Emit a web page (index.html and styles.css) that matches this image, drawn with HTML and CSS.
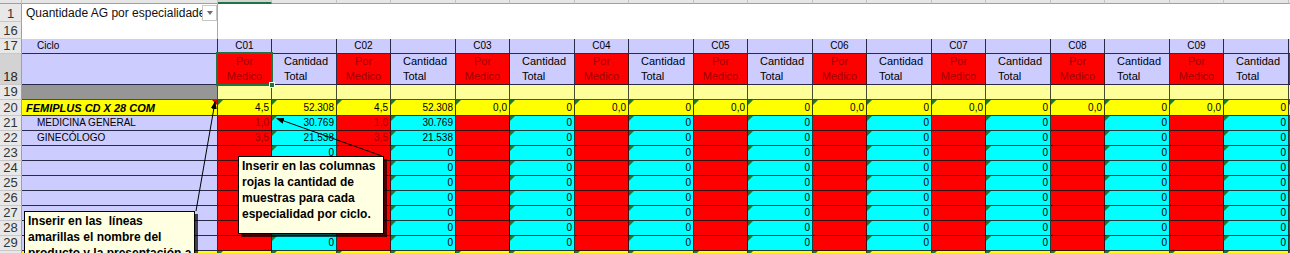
FILE: index.html
```html
<!DOCTYPE html>
<html lang="es">
<head>
<meta charset="utf-8">
<title>Quantidade AG por especialidade</title>
<link rel="stylesheet" href="styles.css">
</head>
<body>
<div class="sheet">
  <!-- column header strip -->
  <div class="row">
    <div class="ch corner"></div><div class="ch"></div>
    <div class="ch chsel"></div><div class="ch"></div>
    <div class="ch"></div><div class="ch"></div>
    <div class="ch"></div><div class="ch"></div>
    <div class="ch"></div><div class="ch"></div>
    <div class="ch"></div><div class="ch"></div>
    <div class="ch"></div><div class="ch"></div>
    <div class="ch"></div><div class="ch"></div>
    <div class="ch"></div><div class="ch"></div>
    <div class="ch"></div><div class="ch"></div>
    <div class="ch"></div>
  </div>

  <!-- row 1 -->
  <div class="row">
    <div class="rh">1</div>
    <div class="title"><span class="title-text">Quantidade AG por especialidade</span><span class="dd"><span class="dd-arrow"></span></span></div>
    <div class="blank"></div>
  </div>

  <!-- row 16 -->
  <div class="row">
    <div class="rh">16</div>
    <div class="frozen"></div>
    <div class="blank"></div>
  </div>

  <!-- row 17 -->
  <div class="row">
    <div class="rh">17</div>
    <div class="c lav label">Ciclo</div>
    <div class="c lav ctr">C01</div><div class="c lav"></div>
    <div class="c lav ctr">C02</div><div class="c lav"></div>
    <div class="c lav ctr">C03</div><div class="c lav"></div>
    <div class="c lav ctr">C04</div><div class="c lav"></div>
    <div class="c lav ctr">C05</div><div class="c lav"></div>
    <div class="c lav ctr">C06</div><div class="c lav"></div>
    <div class="c lav ctr">C07</div><div class="c lav"></div>
    <div class="c lav ctr">C08</div><div class="c lav"></div>
    <div class="c lav ctr">C09</div><div class="c lav"></div>
    <div class="c lav"></div>
  </div>

  <!-- row 18 -->
  <div class="row">
    <div class="rh rhsel">18</div>
    <div class="c lav"></div>
    <div class="c red pm">Por<br>Medico</div><div class="c lav ct">Cantidad<br>Total</div>
    <div class="c red pm">Por<br>Medico</div><div class="c lav ct">Cantidad<br>Total</div>
    <div class="c red pm">Por<br>Medico</div><div class="c lav ct">Cantidad<br>Total</div>
    <div class="c red pm">Por<br>Medico</div><div class="c lav ct">Cantidad<br>Total</div>
    <div class="c red pm">Por<br>Medico</div><div class="c lav ct">Cantidad<br>Total</div>
    <div class="c red pm">Por<br>Medico</div><div class="c lav ct">Cantidad<br>Total</div>
    <div class="c red pm">Por<br>Medico</div><div class="c lav ct">Cantidad<br>Total</div>
    <div class="c red pm">Por<br>Medico</div><div class="c lav ct">Cantidad<br>Total</div>
    <div class="c red pm">Por<br>Medico</div><div class="c lav ct">Cantidad<br>Total</div>
    <div class="c red pm"></div>
  </div>

  <!-- row 19 -->
  <div class="row">
    <div class="rh">19</div>
    <div class="c gray"></div>
    <div class="c pale"></div><div class="c pale"></div>
    <div class="c pale"></div><div class="c pale"></div>
    <div class="c pale"></div><div class="c pale"></div>
    <div class="c pale"></div><div class="c pale"></div>
    <div class="c pale"></div><div class="c pale"></div>
    <div class="c pale"></div><div class="c pale"></div>
    <div class="c pale"></div><div class="c pale"></div>
    <div class="c pale"></div><div class="c pale"></div>
    <div class="c pale"></div><div class="c pale"></div>
    <div class="c pale"></div>
  </div>

  <!-- row 20 -->
  <div class="row">
    <div class="rh">20</div>
    <div class="c yel product">FEMIPLUS CD X 28 COM<span class="note"></span></div>
    <div class="c yel num tri">4,5</div><div class="c yel num tri">52.308</div>
    <div class="c yel num tri">4,5</div><div class="c yel num tri">52.308</div>
    <div class="c yel num tri">0,0</div><div class="c yel num tri">0</div>
    <div class="c yel num tri">0,0</div><div class="c yel num tri">0</div>
    <div class="c yel num tri">0,0</div><div class="c yel num tri">0</div>
    <div class="c yel num tri">0,0</div><div class="c yel num tri">0</div>
    <div class="c yel num tri">0,0</div><div class="c yel num tri">0</div>
    <div class="c yel num tri">0,0</div><div class="c yel num tri">0</div>
    <div class="c yel num tri">0,0</div><div class="c yel num tri">0</div>
    <div class="c yel num tri"></div>
  </div>

  <!-- row 21 -->
  <div class="row">
    <div class="rh">21</div>
    <div class="c lav label">MEDICINA GENERAL</div>
    <div class="c red num">1,0</div><div class="c cy num tri">30.769</div>
    <div class="c red num">1,0</div><div class="c cy num tri">30.769</div>
    <div class="c red"></div><div class="c cy num tri">0</div>
    <div class="c red"></div><div class="c cy num tri">0</div>
    <div class="c red"></div><div class="c cy num tri">0</div>
    <div class="c red"></div><div class="c cy num tri">0</div>
    <div class="c red"></div><div class="c cy num tri">0</div>
    <div class="c red"></div><div class="c cy num tri">0</div>
    <div class="c red"></div><div class="c cy num tri">0</div>
    <div class="c red"></div>
  </div>

  <!-- row 22 -->
  <div class="row">
    <div class="rh">22</div>
    <div class="c lav label">GINECÓLOGO</div>
    <div class="c red num">3,5</div><div class="c cy num tri">21.538</div>
    <div class="c red num">3,5</div><div class="c cy num tri">21.538</div>
    <div class="c red"></div><div class="c cy num tri">0</div>
    <div class="c red"></div><div class="c cy num tri">0</div>
    <div class="c red"></div><div class="c cy num tri">0</div>
    <div class="c red"></div><div class="c cy num tri">0</div>
    <div class="c red"></div><div class="c cy num tri">0</div>
    <div class="c red"></div><div class="c cy num tri">0</div>
    <div class="c red"></div><div class="c cy num tri">0</div>
    <div class="c red"></div>
  </div>

  <!-- rows 23 - 29 -->
  <div class="row">
    <div class="rh">23</div>
    <div class="c lav"></div>
    <div class="c red"></div><div class="c cy num tri">0</div>
    <div class="c red"></div><div class="c cy num tri">0</div>
    <div class="c red"></div><div class="c cy num tri">0</div>
    <div class="c red"></div><div class="c cy num tri">0</div>
    <div class="c red"></div><div class="c cy num tri">0</div>
    <div class="c red"></div><div class="c cy num tri">0</div>
    <div class="c red"></div><div class="c cy num tri">0</div>
    <div class="c red"></div><div class="c cy num tri">0</div>
    <div class="c red"></div><div class="c cy num tri">0</div>
    <div class="c red"></div>
  </div>
  <div class="row">
    <div class="rh">24</div>
    <div class="c lav"></div>
    <div class="c red"></div><div class="c cy num tri">0</div>
    <div class="c red"></div><div class="c cy num tri">0</div>
    <div class="c red"></div><div class="c cy num tri">0</div>
    <div class="c red"></div><div class="c cy num tri">0</div>
    <div class="c red"></div><div class="c cy num tri">0</div>
    <div class="c red"></div><div class="c cy num tri">0</div>
    <div class="c red"></div><div class="c cy num tri">0</div>
    <div class="c red"></div><div class="c cy num tri">0</div>
    <div class="c red"></div><div class="c cy num tri">0</div>
    <div class="c red"></div>
  </div>
  <div class="row">
    <div class="rh">25</div>
    <div class="c lav"></div>
    <div class="c red"></div><div class="c cy num tri">0</div>
    <div class="c red"></div><div class="c cy num tri">0</div>
    <div class="c red"></div><div class="c cy num tri">0</div>
    <div class="c red"></div><div class="c cy num tri">0</div>
    <div class="c red"></div><div class="c cy num tri">0</div>
    <div class="c red"></div><div class="c cy num tri">0</div>
    <div class="c red"></div><div class="c cy num tri">0</div>
    <div class="c red"></div><div class="c cy num tri">0</div>
    <div class="c red"></div><div class="c cy num tri">0</div>
    <div class="c red"></div>
  </div>
  <div class="row">
    <div class="rh">26</div>
    <div class="c lav"></div>
    <div class="c red"></div><div class="c cy num tri">0</div>
    <div class="c red"></div><div class="c cy num tri">0</div>
    <div class="c red"></div><div class="c cy num tri">0</div>
    <div class="c red"></div><div class="c cy num tri">0</div>
    <div class="c red"></div><div class="c cy num tri">0</div>
    <div class="c red"></div><div class="c cy num tri">0</div>
    <div class="c red"></div><div class="c cy num tri">0</div>
    <div class="c red"></div><div class="c cy num tri">0</div>
    <div class="c red"></div><div class="c cy num tri">0</div>
    <div class="c red"></div>
  </div>
  <div class="row">
    <div class="rh">27</div>
    <div class="c lav"></div>
    <div class="c red"></div><div class="c cy num tri">0</div>
    <div class="c red"></div><div class="c cy num tri">0</div>
    <div class="c red"></div><div class="c cy num tri">0</div>
    <div class="c red"></div><div class="c cy num tri">0</div>
    <div class="c red"></div><div class="c cy num tri">0</div>
    <div class="c red"></div><div class="c cy num tri">0</div>
    <div class="c red"></div><div class="c cy num tri">0</div>
    <div class="c red"></div><div class="c cy num tri">0</div>
    <div class="c red"></div><div class="c cy num tri">0</div>
    <div class="c red"></div>
  </div>
  <div class="row">
    <div class="rh">28</div>
    <div class="c lav"></div>
    <div class="c red"></div><div class="c cy num tri">0</div>
    <div class="c red"></div><div class="c cy num tri">0</div>
    <div class="c red"></div><div class="c cy num tri">0</div>
    <div class="c red"></div><div class="c cy num tri">0</div>
    <div class="c red"></div><div class="c cy num tri">0</div>
    <div class="c red"></div><div class="c cy num tri">0</div>
    <div class="c red"></div><div class="c cy num tri">0</div>
    <div class="c red"></div><div class="c cy num tri">0</div>
    <div class="c red"></div><div class="c cy num tri">0</div>
    <div class="c red"></div>
  </div>
  <div class="row">
    <div class="rh">29</div>
    <div class="c lav"></div>
    <div class="c red"></div><div class="c cy num tri">0</div>
    <div class="c red"></div><div class="c cy num tri">0</div>
    <div class="c red"></div><div class="c cy num tri">0</div>
    <div class="c red"></div><div class="c cy num tri">0</div>
    <div class="c red"></div><div class="c cy num tri">0</div>
    <div class="c red"></div><div class="c cy num tri">0</div>
    <div class="c red"></div><div class="c cy num tri">0</div>
    <div class="c red"></div><div class="c cy num tri">0</div>
    <div class="c red"></div><div class="c cy num tri">0</div>
    <div class="c red"></div>
  </div>

  <!-- row 30 (partly visible) -->
  <div class="row">
    <div class="rh">30</div>
    <div class="c yel"></div>
    <div class="c yel tri"></div><div class="c yel tri"></div>
    <div class="c yel tri"></div><div class="c yel tri"></div>
    <div class="c yel tri"></div><div class="c yel tri"></div>
    <div class="c yel tri"></div><div class="c yel tri"></div>
    <div class="c yel tri"></div><div class="c yel tri"></div>
    <div class="c yel tri"></div><div class="c yel tri"></div>
    <div class="c yel tri"></div><div class="c yel tri"></div>
    <div class="c yel tri"></div><div class="c yel tri"></div>
    <div class="c yel tri"></div><div class="c yel tri"></div>
    <div class="c yel tri"></div>
  </div>

  <!-- overlays -->
  <div class="selection"><span class="handle"></span></div>

  <svg class="arrows" width="1290" height="253" viewBox="0 0 1290 253">
    <defs>
      <marker id="ah" markerWidth="8" markerHeight="6" refX="7" refY="3" orient="auto" markerUnits="userSpaceOnUse">
        <path d="M0,0 L8,3 L0,6 Z" fill="#000"/>
      </marker>
    </defs>
    <line x1="382" y1="156" x2="277" y2="118.5" stroke="#000" stroke-width="1" marker-end="url(#ah)"/>
    <line x1="196" y1="211" x2="215" y2="102" stroke="#000" stroke-width="1" marker-end="url(#ah)"/>
  </svg>

  <div class="comment comment-cols">Inserir en las columnas<br>rojas la cantidad de<br>muestras para cada<br>especialidad por ciclo.</div>
  <div class="comment comment-rows">Inserir en las&nbsp; líneas<br>amarillas el nombre del<br>producto y la presentación a</div>
</div>
</body>
</html>
```

FILE: styles.css
```css
* {
  box-sizing: border-box;
  margin: 0;
  padding: 0;
}

html, body {
  width: 1290px;
  height: 253px;
  overflow: hidden;
  background: #ffffff;
}

body {
  font-family: "Liberation Sans", Arial, sans-serif;
  font-size: 10px;
  color: #000;
}

.sheet {
  position: relative;
  display: grid;
  grid-template-columns: 22px 196px repeat(9, 54px 65px) 1fr;
  grid-template-rows: 4px 18px 17px 15px 31px 15px 16px repeat(9, 15px) 15px;
  width: 1290px;
}

.row {
  display: contents;
}

/* column header strip */
.ch {
  background: #e6e6e6;
  border-right: 1px solid #c4c4c4;
  border-bottom: 1px solid #9f9f9f;
}
.ch.chsel {
  background: #d2d2d2;
  border-bottom: 2px solid #217346;
}

/* row headers */
.rh {
  background: #e8e8e8;
  border-right: 1px solid #9f9f9f;
  border-bottom: 1px solid #c8c8c8;
  color: #333;
  font-size: 13px;
  line-height: 14px;
  display: flex;
  align-items: flex-end;
  justify-content: center;
  overflow: hidden;
}
.rh.rhsel {
  background: #d3d3d3;
  color: #222;
}

/* row 1 title */
.title {
  display: flex;
  align-items: center;
  padding-left: 4px;
  border-right: 1px solid #a8a8a8;
  background: #fff;
  font-size: 12px;
  white-space: nowrap;
  overflow: hidden;
}
.title-text {
  flex: 1;
  overflow: hidden;
  color: #111;
}
.dd {
  width: 15px;
  height: 16px;
  border: 1px solid #c6c6c6;
  background: #fff;
  display: flex;
  align-items: center;
  justify-content: center;
  flex: none;
}
.dd-arrow {
  width: 0;
  height: 0;
  border-left: 3px solid transparent;
  border-right: 3px solid transparent;
  border-top: 4px solid #6f6f6f;
}

.frozen {
  border-right: 1px solid #a8a8a8;
  background: #fff;
}
.blank {
  grid-column: 3 / -1;
  background: #fff;
}

/* cells */
.c {
  position: relative;
  border-right: 1px solid #2a2a4a;
  border-bottom: 1px solid #2a2a4a;
  white-space: nowrap;
  overflow: hidden;
  line-height: 14px;
}
.lav  { background: #ccccff; }
.red  { background: #ff0000; border-color: #3a1010; }
.cy   { background: #00ffff; border-color: #1c3b3b; }
.yel  { background: #ffff00; border-color: #3a3a10; }
.pale { background: #ffff99; border-color: #4a4a30; }
.gray { background: #969696; border-color: #4a4a4a; }

.label {
  padding-left: 15px;
  display: flex;
  align-items: flex-end;
}
.ctr {
  text-align: center;
}
.pm {
  font-size: 11px;
  color: #a00000;
  text-align: center;
  line-height: 15px;
  display: flex;
  align-items: flex-end;
  justify-content: center;
  white-space: normal;
}
.ct {
  font-size: 11px;
  line-height: 15px;
  padding-left: 12px;
  display: flex;
  align-items: flex-end;
  white-space: normal;
}
.num {
  display: flex;
  align-items: flex-end;
  justify-content: flex-end;
  padding-right: 2px;
}
.red.num {
  color: #a00000;
}

.product {
  font-weight: bold;
  font-style: italic;
  font-size: 11px;
  padding-left: 4px;
  display: flex;
  align-items: flex-end;
}
.note {
  position: absolute;
  top: 0;
  right: 0;
  width: 0;
  height: 0;
  border-top: 5px solid #e00000;
  border-left: 5px solid transparent;
}

/* green error-indicator triangles */
.tri::before {
  content: "";
  position: absolute;
  top: 0;
  left: 0;
  width: 0;
  height: 0;
  border-top: 5px solid #1b7a2e;
  border-right: 5px solid transparent;
}

/* selection rectangle on C01 row 18 */
.selection {
  position: absolute;
  left: 216px;
  top: 52px;
  width: 57px;
  height: 34px;
  border: 2px solid #217346;
  pointer-events: none;
}
.handle {
  position: absolute;
  right: -4px;
  bottom: -4px;
  width: 6px;
  height: 6px;
  background: #217346;
  border: 1px solid #fff;
}

.arrows {
  position: absolute;
  left: 0;
  top: 0;
  pointer-events: none;
}

/* comments */
.comment {
  position: absolute;
  background: #ffffe1;
  border: 1px solid #000;
  box-shadow: 3px 3px 0 rgba(0, 0, 0, 0.7);
  font-family: "Liberation Sans", Arial, sans-serif;
  font-weight: bold;
  font-size: 12px;
  line-height: 16px;
  color: #000;
  padding: 1px 0 0 3px;
  white-space: nowrap;
}
.comment-cols {
  left: 238px;
  top: 156px;
  width: 146px;
  height: 78px;
}
.comment-rows {
  left: 24px;
  top: 211px;
  width: 171px;
  height: 70px;
}
```
